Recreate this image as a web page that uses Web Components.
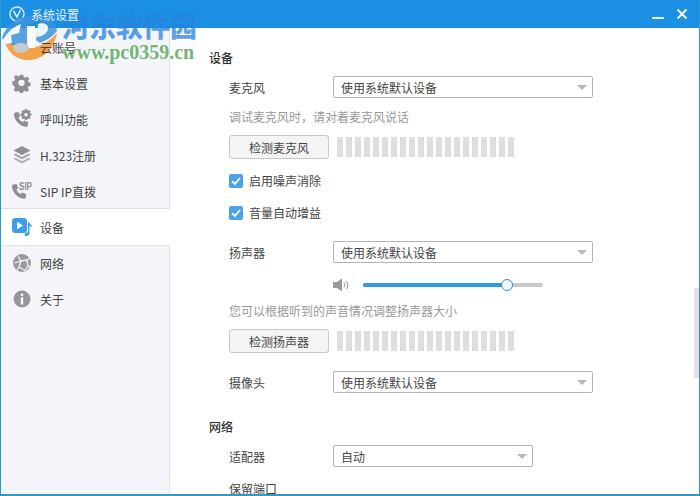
<!DOCTYPE html>
<html lang="zh">
<head>
<meta charset="utf-8">
<title>系统设置</title>
<style>
html, body { margin: 0; height: 100%; overflow: hidden; }
body { font: 12px "Noto Sans CJK SC", "Open Sans", sans-serif; color: #444; }
</style>
</head>
<body>
<app-window>
  <title-bar slot="top" label="系统设置"></title-bar>
  <side-nav slot="side">
    <nav-item icon="cloud" label="云账号"></nav-item>
    <nav-item icon="gear" label="基本设置"></nav-item>
    <nav-item icon="call" label="呼叫功能"></nav-item>
    <nav-item icon="stack" label="H.323注册"></nav-item>
    <nav-item icon="sip" label="SIP IP直拨"></nav-item>
    <nav-item icon="device" label="设备" active></nav-item>
    <nav-item icon="net" label="网络"></nav-item>
    <nav-item icon="info" label="关于"></nav-item>
  </side-nav>
  <settings-page slot="main">
    <section-head>设备</section-head>
    <select-row label="麦克风" value="使用系统默认设备" style="margin-top:8px"></select-row>
    <hint-text style="margin-top:9px">调试麦克风时，请对着麦克风说话</hint-text>
    <test-row label="检测麦克风" style="margin-top:8px"></test-row>
    <check-row style="margin-top:13px">启用噪声消除</check-row>
    <check-row style="margin-top:15px">音量自动增益</check-row>
    <select-row label="扬声器" value="使用系统默认设备" style="margin-top:20px"></select-row>
    <volume-row style="margin-top:15px"></volume-row>
    <hint-text style="margin-top:9px">您可以根据听到的声音情况调整扬声器大小</hint-text>
    <test-row label="检测扬声器" style="margin-top:8px"></test-row>
    <select-row label="摄像头" value="使用系统默认设备" style="margin-top:18px"></select-row>
    <section-head style="margin-top:24px">网络</section-head>
    <select-row label="适配器" value="自动" short style="margin-top:8px"></select-row>
    <plain-label style="margin-top:12px">保留端口</plain-label>
  </settings-page>
</app-window>
<water-mark></water-mark>

<script>
const ICONS = {
  cloud: '',
  gear: `<svg width="19" height="19" viewBox="0 0 20 20"><path fill="#8e8e93" fill-rule="evenodd" d="M8.200 1h3.600l.5 2.600 1.500.7 2.300-1.400 2.400 2.600-1.400 2.200.6 1.500 2.300.6v3.400l-2.500.6-.6 1.400 1.400 2.300-2.500 2.500-2.200-1.400-1.500.6-.6 2.700H8.200l-.6-2.600-1.500-.7-2.300 1.400-2.400-2.500 1.400-2.300-.6-1.400L0 11.600V8.200l2.400-.6.6-1.500-1.400-2.200L4 1.400l2.200 1.500 1.500-.6zM10 6.400a3.500 3.500 0 1 0 0 7 3.500 3.500 0 0 0 0-7z" transform="translate(.4 -.2) scale(.96)"/></svg>`,
  call: `<svg width="22" height="22" viewBox="0 0 22 22"><path fill="#8e8e93" d="M4.500 4.500 7.500 4l1.800 4-1.800 1.600c.7 2 2.200 3.600 4.300 4.500l1.500-1.700 4 1.800-.5 3c-.2 1.200-1.200 1.800-2.400 1.600C8.800 18 3.900 13 3 7c-.2-1.200.3-2.200 1.500-2.500z"/><path fill="#8e8e93" fill-rule="evenodd" d="M14 1h2l.3 1.200.8.400 1.100-.6 1.400 1.400-.7 1.100.4.800 1.200.3v2l-1.200.3-.4.800.7 1.100-1.400 1.400-1.100-.7-.8.400-.3 1.200h-2l-.3-1.200-.8-.4-1.100.7-1.400-1.400.7-1.100-.4-.8-1.200-.3v-2l1.200-.3.400-.8-.7-1.100L11.800 2l1.100.6.800-.4zM15 4.900a1.800 1.800 0 1 0 0 3.600 1.800 1.800 0 0 0 0-3.600z"/></svg>`,
  stack: `<svg width="20" height="20" viewBox="0 0 20 20"><path fill="#8e8e93" d="M10 1l8.500 4.500L10 10 1.500 5.500z"/><path fill="#a3a3a8" d="M3.500 8.500 10 12l6.500-3.500 2 1.200L10 14.300 1.500 9.700z"/><path fill="#b0b0b4" d="M3.500 12.700 10 16.200l6.500-3.500 2 1.200L10 18.500l-8.500-4.600z"/></svg>`,
  sip: `<svg width="24" height="22" viewBox="0 0 24 22"><path fill="#8e8e93" d="M3.500 4.500 6.500 4l1.800 4-1.800 1.600c.7 2 2.200 3.600 4.300 4.500l1.500-1.700 4 1.800-.5 3c-.2 1.200-1.200 1.800-2.400 1.600C7.800 18 2.900 13 2 7c-.2-1.200.3-2.200 1.500-2.500z"/><text x="9" y="10" font-family="Liberation Sans" font-size="10" font-weight="700" fill="#8e8e93" textLength="13" lengthAdjust="spacingAndGlyphs">SIP</text></svg>`,
  device: `<svg width="22" height="20" viewBox="0 0 22 20"><rect x="1" y="1" width="15" height="15" rx="3.500" fill="#3d9ee8"/><path fill="#fff" d="M6 4.800v7.400l6-3.700z"/><path fill="#3d9ee8" d="M17 5.500h1.500c.3 1.500 2 2 2.500 4l-1 .5c-.4-.8-1-1.300-1.500-1.500V16c0 2-1.500 3-3 3-1.200 0-2-.7-2-1.600 0-1.200 1.200-2 2.500-2 .4 0 .7 0 1 .2z"/></svg>`,
  net: `<svg width="20" height="20" viewBox="0 0 20 20"><circle cx="10" cy="10" r="9" fill="#9a9aa0"/><g fill="none" stroke="#f3f5f9" stroke-width="1.300"><path d="M6 3.500 9 8l-6.500 2"/><path d="M9 8l6-1 3-2"/><path d="M15 7l1 6 2 1"/><path d="M9 8 7 14l-2 3"/><path d="M7 14l6 3.500"/><path d="M16 13l-3 4.500"/></g></svg>`,
  info: `<svg width="18" height="18" viewBox="0 0 18 18"><circle cx="9" cy="9" r="8.500" fill="#96969c"/><rect x="7.700" y="3.500" width="2.600" height="2.600" rx="1.300" fill="#fff"/><rect x="7.800" y="7.300" width="2.400" height="7.200" fill="#fff"/></svg>`
};

class AppWindow extends HTMLElement {
  constructor() {
    super();
    this.attachShadow({ mode: 'open' }).innerHTML = `
<style>
:host { display: flex; flex-direction: column; box-sizing: border-box; width: 700px; height: 496px;
  overflow: hidden; border: solid #2d9bc4; border-width: 0 1px 2px 1px; background: #fff; }
.body { flex: 1; display: flex; min-height: 0; }
</style>
<slot name="top"></slot>
<div class="body"><slot name="side"></slot><slot name="main"></slot></div>`;
  }
}

class TitleBar extends HTMLElement {
  constructor() {
    super();
    this.attachShadow({ mode: 'open' }).innerHTML = `
<style>
:host { display: flex; align-items: center; height: 28px; margin: 0 -1px; background: #1a8fe3; color: #e8f4fd; padding-left: 9px; }
span { margin-left: 6px; position: relative; z-index: 2; }
.ctl { margin-left: auto; display: flex; align-items: center; gap: 12px; margin-right: 12px; }
</style>
<svg width="16" height="16" viewBox="0 0 16 16"><circle cx="8" cy="8" r="7" fill="none" stroke="#d7ecfb" stroke-width="1.500"/><path d="M4.500 5 8 11l3.500-7" fill="none" stroke="#d7ecfb" stroke-width="1.600"/></svg>
<span>${this.getAttribute('label')}</span>
<div class="ctl">
  <svg width="12" height="12" viewBox="0 0 12 12"><rect y="9" width="12" height="2" fill="#e8f4fd"/></svg>
  <svg width="12" height="12" viewBox="0 0 12 12"><path d="M1.500 1.500l9 9m0-9-9 9" stroke="#f4faff" stroke-width="2"/></svg>
</div>`;
  }
}

class SideNav extends HTMLElement {
  constructor() {
    super();
    this.attachShadow({ mode: 'open' }).innerHTML = `
<style>
:host { display: block; box-sizing: border-box; width: 169px; flex: none; background: #f3f5f9;
  border-right: 1px solid #dfe2e8; padding-top: 1px; color: #444; }
</style>
<slot></slot>`;
  }
}

class NavItem extends HTMLElement {
  constructor() {
    super();
    this.attachShadow({ mode: 'open' }).innerHTML = `
<style>
:host { display: flex; align-items: center; box-sizing: border-box; height: 36px; position: relative; z-index: 2; }
:host([active]) { background: #fff; margin-right: -1px; box-shadow: 0 -1px 0 #dfe2e8, 0 1px 0 #dfe2e8; }
.ic { width: 39px; flex: none; display: flex; justify-content: center; padding-left: 2px; box-sizing: border-box; }
</style>
<div class="ic">${ICONS[this.getAttribute('icon')]}</div><span>${this.getAttribute('label')}</span>`;
  }
}

class SettingsPage extends HTMLElement {
  constructor() {
    super();
    this.attachShadow({ mode: 'open' }).innerHTML = `
<style>
:host { display: flex; flex-direction: column; flex: 1; min-width: 0; position: relative; padding: 20px 0 0 39px; }
.bar { position: absolute; right: 0; top: 260px; width: 5px; height: 90px; background: #e2e2e2; }
</style>
<slot></slot><div class="bar"></div>`;
  }
}

class SectionHead extends HTMLElement {
  constructor() {
    super();
    this.attachShadow({ mode: 'open' }).innerHTML = `
<style>:host { display: block; height: 20px; line-height: 20px; color: #333; font-weight: 500; }</style><slot></slot>`;
  }
}

class SelectRow extends HTMLElement {
  constructor() {
    super();
    const w = this.hasAttribute('short') ? 200 : 260;
    this.attachShadow({ mode: 'open' }).innerHTML = `
<style>
:host { display: flex; align-items: center; height: 22px; padding-left: 20px; }
label { width: 104px; flex: none; color: #444; }
.box { box-sizing: border-box; width: ${w}px; height: 22px; display: flex; align-items: center; padding: 0 5px 0 7px;
  border: 1px solid #b4b4b4; border-radius: 2px; color: #444; }
i { margin-left: auto; border: solid transparent; border-width: 5px 5px 0; border-top-color: #b8b8b8; }
</style>
<label>${this.getAttribute('label')}</label>
<div class="box">${this.getAttribute('value')}<i></i></div>`;
  }
}

class HintText extends HTMLElement {
  constructor() {
    super();
    this.attachShadow({ mode: 'open' }).innerHTML = `
<style>:host { display: block; height: 20px; line-height: 20px; padding-left: 20px; color: #999; }</style><slot></slot>`;
  }
}

class PlainLabel extends HTMLElement {
  constructor() {
    super();
    this.attachShadow({ mode: 'open' }).innerHTML = `
<style>:host { display: block; height: 20px; line-height: 20px; padding-left: 20px; color: #444; }</style><slot></slot>`;
  }
}

class TestRow extends HTMLElement {
  constructor() {
    super();
    const bars = '<b></b>'.repeat(20);
    this.attachShadow({ mode: 'open' }).innerHTML = `
<style>
:host { display: flex; align-items: center; height: 24px; padding-left: 20px; }
button { box-sizing: border-box; width: 100px; height: 24px; padding: 0; font: inherit; color: #444;
  background: #f4f4f4; border: 1px solid #c8c8c8; border-radius: 3px; }
.meter { display: flex; gap: 3px; margin-left: 8px; }
b { width: 6px; height: 20px; background: #dedede; }
</style>
<button>${this.getAttribute('label')}</button><div class="meter">${bars}</div>`;
  }
}

class CheckRow extends HTMLElement {
  constructor() {
    super();
    this.attachShadow({ mode: 'open' }).innerHTML = `
<style>
:host { display: flex; align-items: center; gap: 6px; height: 18px; padding-left: 20px; color: #444; }
</style>
<svg width="14" height="14" viewBox="0 0 14 14"><rect width="14" height="14" rx="2" fill="#4aa3e8"/><path d="M3 7.200 6 10l5-6" fill="none" stroke="#fff" stroke-width="1.800"/></svg>
<slot></slot>`;
  }
}

class VolumeRow extends HTMLElement {
  constructor() {
    super();
    this.attachShadow({ mode: 'open' }).innerHTML = `
<style>
:host { display: flex; align-items: center; height: 18px; padding-left: 124px; }
.track { position: relative; width: 180px; height: 4px; margin-left: 13px; background: #c9c9c9; border-radius: 2px; }
.fill { width: 144px; height: 100%; background: #2d9be6; border-radius: 2px; }
.thumb { position: absolute; left: 138px; top: -4px; box-sizing: border-box; width: 12px; height: 12px; border-radius: 50%;
  background: #f2f7fc; border: 1px solid #3d8fc8; }
</style>
<svg width="17" height="14" viewBox="0 0 17 14"><path fill="#9a9a9a" d="M0 4h4l5-3.500v13L4 10H0z"/><path d="M11 4.500c1 1.500 1 3.500 0 5M13.500 3c1.500 2.500 1.500 5.500 0 8" fill="none" stroke="#9a9a9a"/></svg>
<div class="track"><div class="fill"></div><div class="thumb"></div></div>`;
  }
}

class WaterMark extends HTMLElement {
  constructor() {
    super();
    this.attachShadow({ mode: 'open' }).innerHTML = `
<style>
:host { position: absolute; left: 0; top: 0; width: 200px; height: 65px; pointer-events: none; z-index: 1; }
svg { position: absolute; left: 0; top: 0; }
.cn { position: absolute; left: 62px; top: 11px; font: 900 27px/30px "Noto Sans CJK SC", sans-serif;
  color: rgba(40,130,220,.75); white-space: nowrap; }
.url { position: absolute; left: 62px; top: 42px; font: bold 20px/20px "Liberation Serif", serif; color: rgba(96,172,98,.9); white-space: nowrap; }
</style>
<svg width="60" height="64" viewBox="0 0 60 64">
  <path fill="#f2a24a" d="M4 40C8 54 18 61 30 60c14-1 24-11 27-27-6 6-11 10-18 13-8 3-14 2-20-1z"/>
  <path fill="#3d93dc" opacity=".85" d="M2 38C6 24 18 16 32 16c14 0 24 6 25 15-5 6-10 9-17 12l-4-3 4-20-12 5v20L20 46C12 46 6 43 2 38z"/>
  <path fill="#fff" opacity=".95" d="M3 40c4-8 10-13 18-16l-2 9-8 2 1 8-6 1z"/>
  <path fill="#fff" opacity=".9" d="M38 24c5-2 10 0 10 4 0 5-5 8-11 9z"/>
  <path fill="#fff" opacity=".9" d="M27 26h8v22h-8z"/>
  <ellipse cx="21" cy="48" rx="8" ry="5" fill="#c8c8c8"/>
</svg>
<div class="cn">河东软件园</div>
<div class="url">www.pc0359.cn</div>`;
  }
}

customElements.define('app-window', AppWindow);
customElements.define('title-bar', TitleBar);
customElements.define('side-nav', SideNav);
customElements.define('nav-item', NavItem);
customElements.define('settings-page', SettingsPage);
customElements.define('section-head', SectionHead);
customElements.define('select-row', SelectRow);
customElements.define('hint-text', HintText);
customElements.define('plain-label', PlainLabel);
customElements.define('test-row', TestRow);
customElements.define('check-row', CheckRow);
customElements.define('volume-row', VolumeRow);
customElements.define('water-mark', WaterMark);
</script>
</body>
</html>
